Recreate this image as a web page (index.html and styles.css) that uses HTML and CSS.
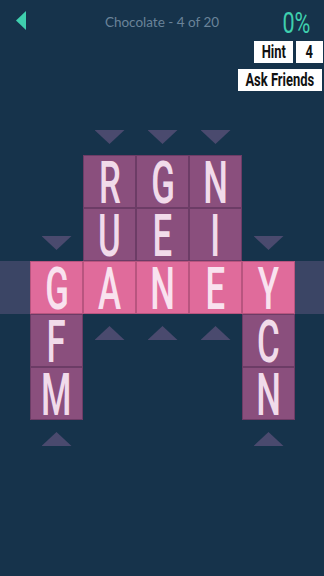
FILE: index.html
```html
<!DOCTYPE html>
<html>
<head>
<meta charset="utf-8">
<link rel="stylesheet" href="styles.css">
</head>
<body>
<div class="screen">
  <header class="header">
    <div class="left">
      <svg class="back" width="12" height="20" viewBox="0 0 12 20"><polygon points="0,9.5 10,0 10,19" fill="#3fcfae"/></svg>
    </div>
    <div class="title">Chocolate - 4 of 20</div>
    <div class="right">
      <div class="pct"><span>0%</span></div>
      <div class="hint-row">
        <div class="box hint"><span>Hint</span></div>
        <div class="box count"><span>4</span></div>
      </div>
      <div class="box ask"><span>Ask Friends</span></div>
    </div>
  </header>

  <main class="board">
    <div class="band"></div>

    <div class="tri down c3 r1"></div>
    <div class="tri down c4 r1"></div>
    <div class="tri down c5 r1"></div>

    <div class="tile purple c3 r2"><span>R</span></div>
    <div class="tile purple c4 r2"><span>G</span></div>
    <div class="tile purple c5 r2"><span>N</span></div>

    <div class="tri down c2 r3"></div>
    <div class="tile purple c3 r3"><span>U</span></div>
    <div class="tile purple c4 r3"><span>E</span></div>
    <div class="tile purple c5 r3"><span>I</span></div>
    <div class="tri down c6 r3"></div>

    <div class="tile pink c2 r4"><span>G</span></div>
    <div class="tile pink c3 r4"><span>A</span></div>
    <div class="tile pink c4 r4"><span>N</span></div>
    <div class="tile pink c5 r4"><span>E</span></div>
    <div class="tile pink c6 r4"><span>Y</span></div>

    <div class="tile purple c2 r5"><span>F</span></div>
    <div class="tri up c3 r5"></div>
    <div class="tri up c4 r5"></div>
    <div class="tri up c5 r5"></div>
    <div class="tile purple c6 r5"><span>C</span></div>

    <div class="tile purple c2 r6"><span>M</span></div>
    <div class="tile purple c6 r6"><span>N</span></div>

    <div class="tri up c2 r7"></div>
    <div class="tri up c6 r7"></div>
  </main>
</div>
</body>
</html>
```

FILE: styles.css
```css
html, body {
  margin: 0;
  padding: 0;
  background: #16334b;
}

.screen {
  width: 324px;
  height: 576px;
  background: #16334b;
  overflow: hidden;
  font-family: Roboto, "Liberation Sans", sans-serif;
}

.header {
  height: 102px;
  display: grid;
  grid-template-columns: 87px 1fr 87px;
  align-items: start;
}

.left {
  padding: 11px 0 0 16px;
}

.back {
  display: block;
}

.title {
  font-family: Lato, "Open Sans", sans-serif;
  font-size: 13.5px;
  color: #6a8399;
  text-align: center;
  padding-top: 14px;
  white-space: nowrap;
}

.right {
  display: flex;
  flex-direction: column;
  align-items: flex-end;
  padding-top: 11px;
}

.pct {
  height: 24px;
  width: 34px;
  margin-right: 11px;
  display: flex;
  justify-content: center;
  font-size: 30px;
  line-height: 24px;
  color: #3fcfae;
}

.pct span {
  display: inline-block;
  transform: scaleX(0.72);
  white-space: nowrap;
}

.hint-row {
  display: flex;
  gap: 3px;
  margin-top: 6px;
  margin-right: 1px;
}

.box {
  height: 22px;
  background: #ffffff;
  display: flex;
  justify-content: center;
  align-items: center;
  color: #111111;
  font-weight: 700;
  font-size: 18px;
  line-height: 22px;
}

.box span {
  display: inline-block;
  transform: scaleX(0.72);
  white-space: nowrap;
}

.hint { width: 39px; }
.count { width: 27px; }

.ask {
  width: 84px;
  margin-top: 6px;
  margin-right: 2px;
}

.board {
  display: grid;
  grid-template-columns: 30px repeat(5, 53px) 1fr;
  grid-template-rows: repeat(7, 53px);
}

.band {
  grid-column: 1 / -1;
  grid-row: 4;
  background: #3b4565;
}

.c2 { grid-column: 2; }
.c3 { grid-column: 3; }
.c4 { grid-column: 4; }
.c5 { grid-column: 5; }
.c6 { grid-column: 6; }
.r1 { grid-row: 1; }
.r2 { grid-row: 2; }
.r3 { grid-row: 3; }
.r4 { grid-row: 4; }
.r5 { grid-row: 5; }
.r6 { grid-row: 6; }
.r7 { grid-row: 7; }

.tile {
  box-sizing: border-box;
  display: flex;
  justify-content: center;
  align-items: center;
  font-size: 44px;
  font-weight: 500;
  line-height: 36px;
}

.tile span {
  display: inline-block;
  transform: translateY(1px) scale(0.79, 1.36);
}

.purple {
  background: #8a4f7d;
  border: 1px solid #6c3c66;
  color: #f1dbea;
}

.pink {
  background: #e06b9b;
  border: 1px solid #b8557f;
  color: #f9e2ef;
}

.tri {
  width: 30px;
  height: 14px;
  justify-self: center;
  background: #4a4a6e;
}

.down {
  align-self: end;
  margin-bottom: 11px;
  clip-path: polygon(0 0, 100% 0, 50% 100%);
}

.up {
  align-self: start;
  margin-top: 12px;
  clip-path: polygon(50% 0, 100% 100%, 0 100%);
}
```
